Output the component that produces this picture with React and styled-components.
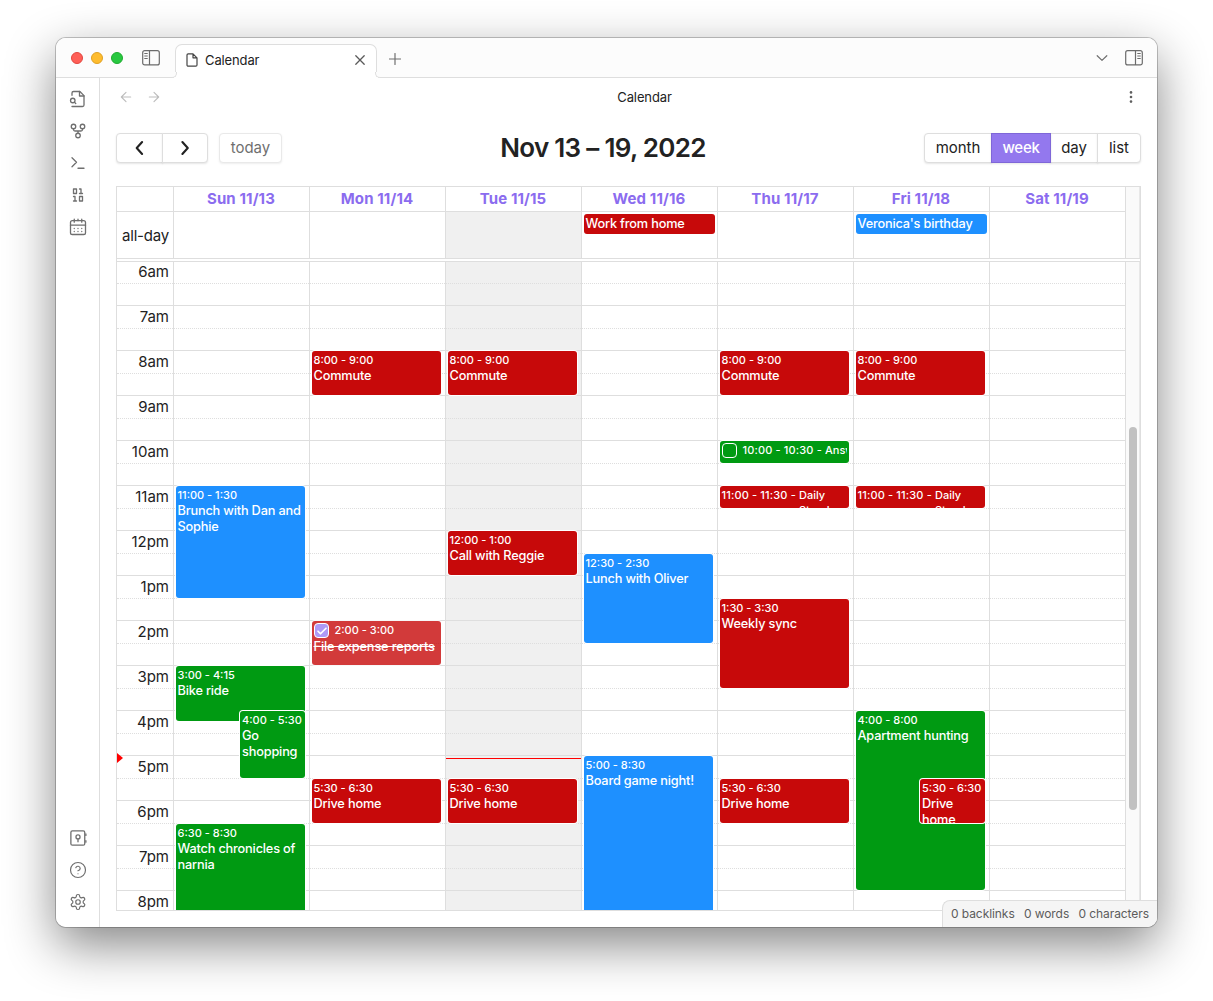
import React from "react";
import styled, { createGlobalStyle, css } from "styled-components";

const line = "#dedede";
const ink = "#222222";
const muted = "#6f6f6f";
const red = "#c7090a";
const green = "#009a12";
const blue = "#1e90ff";
const accent = "#8b6cef";

const GlobalStyle = createGlobalStyle`
  * { box-sizing: border-box; }
  body { margin: 0; background: #fff; overflow: hidden; }
`;

const Desktop = styled.div`
  width: 1213px;
  height: 1001px;
  padding: 38px 56px 74px;
  background: #fff;
  font-family: Inter, "Liberation Sans", sans-serif;
  color: ${ink};
`;

const Window = styled.div`
  width: 1101px;
  height: 889px;
  display: flex;
  flex-direction: column;
  position: relative;
  overflow: hidden;
  border-radius: 10px;
  background: #fff;
`;

const WindowShadow = styled.div`
  width: 1101px;
  border-radius: 10px;
  box-shadow: 0 0 0 1px rgba(0, 0, 0, 0.22), 0 18px 50px rgba(0, 0, 0, 0.48);
`;

const TitleBar = styled.header`
  height: 40px;
  flex: none;
  display: flex;
  background: #fcfcfc;
  border-bottom: 1px solid ${line};
`;

const Lights = styled.div`
  width: 119px;
  padding: 14px 0 0 15px;
  display: flex;
  gap: 8px;
  svg { margin: -2px 0 0 11px; }
`;

const Light = styled.span`
  width: 12px;
  height: 12px;
  border-radius: 50%;
  background: ${(p) => p.$fill};
  border: 1px solid ${(p) => p.$edge};
`;

const Tab = styled.div`
  position: relative;
  width: 202px;
  height: 34px;
  margin-top: 6px;
  padding: 0 10px 3px 10px;
  display: flex;
  align-items: center;
  background: #fff;
  border: 1px solid ${line};
  border-bottom: 0;
  border-radius: 7px 7px 0 0;
  font-size: 13px;
  letter-spacing: -0.12px;
  &::before, &::after {
    content: "";
    position: absolute;
    bottom: 0;
    width: 5px;
    height: 5px;
    background: #fcfcfc;
    border-bottom: 1px solid ${line};
  }
  &::before {
    left: -5px;
    border-right: 1px solid ${line};
    border-bottom-right-radius: 5px;
    box-shadow: 2px 2px 0 -1px #fff;
  }
  &::after {
    right: -5px;
    border-left: 1px solid ${line};
    border-bottom-left-radius: 5px;
    box-shadow: -2px 2px 0 -1px #fff;
  }
`;

const TabTitle = styled.span`
  flex: 1;
  margin-left: 7px;
`;

const BarIcons = styled.div`
  flex: 1;
  display: flex;
  align-items: center;
  padding: 1px 14px 0 12px;
  gap: 17px;
  svg:first-child { margin-right: auto; margin-top: 2px; }
`;

const Main = styled.div`
  flex: 1;
  min-height: 0;
  display: flex;
`;

const Ribbon = styled.nav`
  width: 44px;
  flex: none;
  padding: 5px 0 9px;
  display: flex;
  flex-direction: column;
  align-items: center;
  border-right: 1px solid ${line};
`;

const RibbonButton = styled.span`
  width: 32px;
  height: 32px;
  display: flex;
  align-items: center;
  justify-content: center;
  ${(p) => p.$push && css`margin-top: auto;`}
`;

const Leaf = styled.main`
  flex: 1;
  min-width: 0;
  display: flex;
  flex-direction: column;
`;

const ViewHeader = styled.div`
  height: 38px;
  display: flex;
  align-items: center;
  padding: 0 10px 0 12px;
`;

const NavIcon = styled.span`
  width: ${(p) => p.$w || 28}px;
  display: flex;
  justify-content: center;
`;

const ViewTitle = styled.div`
  flex: 1;
  margin-left: 6px;
  padding-bottom: 1px;
  text-align: center;
  font-size: 13px;
  letter-spacing: -0.12px;
`;

const Toolbar = styled.div`
  margin: 17px 16px 0;
  height: 30px;
  display: flex;
  align-items: center;
  justify-content: space-between;
`;

const ToolGroup = styled.div`
  display: flex;
  align-items: center;
`;

const ButtonGroup = styled.div`
  display: flex;
  border-radius: 4px;
  margin-right: ${(p) => p.$gap || 0}px;
`;

const ToolButton = styled.button`
  width: ${(p) => p.$w}px;
  height: 30px;
  margin: 0 0 0 ${(p) => (p.$joined ? -1 : 0)}px;
  padding: 0 0 ${(p) => (p.$icon ? 0 : 1)}px;
  display: flex;
  align-items: center;
  justify-content: center;
  font: 400 15px Inter, sans-serif;
  letter-spacing: -0.05px;
  color: ${ink};
  background: #fff;
  border: 1px solid ${line};
  border-radius: ${(p) => p.$radius || "0"};
  box-shadow: 0 1px 2px rgba(0, 0, 0, 0.1);
  ${(p) => p.$dim && css`opacity: 0.65;`}
  ${(p) => p.$active && css`
    position: relative;
    color: #fff;
    font-weight: 500;
    letter-spacing: -0.3px;
    background: #9378ee;
    border-color: #7f67d8;
  `}
`;

const RangeTitle = styled.h2`
  margin: 0;
  font-size: 26px;
  font-weight: 600;
  line-height: 30px;
  letter-spacing: -0.7px;
  white-space: nowrap;
`;

const Grid = styled.section`
  margin: 23px 16px 0;
  height: 725px;
  display: flex;
  flex-direction: column;
  border: 1px solid ${line};
`;

const HeadRows = styled.div`
  display: flex;
  height: 72px;
  flex: none;
  border-bottom: 1px solid ${line};
`;

const AxisHead = styled.div`
  width: 57px;
  border-right: 1px solid ${line};
`;

const HeadColumn = styled.div`
  width: 136px;
  border-right: 1px solid ${line};
`;

const DayName = styled.div`
  height: 25px;
  padding-right: 1px;
  border-bottom: 1px solid ${line};
  text-align: center;
  font-size: 15px;
  line-height: 24px;
  font-weight: 700;
  letter-spacing: 0.12px;
  color: ${accent};
`;

const AllDayCell = styled.div`
  height: 46px;
  padding: 2px;
  font-size: 15px;
  background: ${(p) => (p.$today ? "#f0f0f0" : "#fff")};
`;

const AllDayLabel = styled.div`
  height: 46px;
  padding: 0 4px 0;
  display: flex;
  align-items: center;
  justify-content: flex-end;
  font-size: 15px;
  letter-spacing: -0.2px;
  white-space: nowrap;
`;

const AllDayEvent = styled.div`
  width: 131px;
  height: 20px;
  padding-left: 1.5px;
  border-radius: 3px;
  background: ${(p) => p.$color};
  color: #fff;
  font-size: 12.75px;
  font-weight: 500;
  line-height: 19px;
  letter-spacing: -0.18px;
  white-space: nowrap;
`;

const Gutter = styled.div`
  width: 14px;
  background: #fafafa;
  border-right: 1px solid #e8e8e8;
`;

const Thumb = styled.div`
  width: 8px;
  height: 383px;
  margin: 165px 0 0 3px;
  border-radius: 4px;
  background: #c1c1c1;
`;

const Body = styled.div`
  margin-top: 2px;
  flex: 1;
  min-height: 0;
  display: flex;
  overflow: hidden;
  border-top: 1px solid ${line};
`;

const Axis = styled.div`
  width: 57px;
  margin-top: -1px;
  position: relative;
  border-right: 1px solid ${line};
`;

const HalfSlot = styled.div`
  height: ${(p) => (p.$first ? 23 : 22)}px;
  padding-right: 4px;
  border-bottom: 1px ${(p) => (p.$first ? "dotted" : "solid")} ${line};
  text-align: right;
  font-size: 15px;
  line-height: 22px;
`;

const DayColumn = styled.div`
  width: 136px;
  margin-top: -1px;
  display: grid;
  grid-template-columns: 135px;
  border-right: 1px solid ${line};
  background: ${(p) => (p.$today ? "#f0f0f0" : "#fff")};
  > * { grid-area: 1 / 1; }
`;

const Slots = styled.div``;

const Events = styled.div`
  display: grid;
  grid-template-columns: 66px 63px;
  grid-template-rows: repeat(15, 11px 12px 11px 11px);
  padding-left: 2px;
`;

const EventBox = styled.article`
  grid-row: ${(p) => p.$from} / ${(p) => p.$to};
  grid-column: 1 / -1;
  margin-bottom: 1px;
  margin-left: ${(p) => (p.$inset ? 64 : 0)}px;
  padding: 1px 2px 1px ${(p) => (p.$inset ? 2 : 1.5)}px;
  min-height: 0;
  overflow: hidden;
  border-radius: 3px;
  background: ${(p) => p.$color};
  box-shadow: 0 0 0 1px #fff;
  color: #fff;
  font-weight: 500;
  ${(p) => p.$done && css`opacity: 0.8;`}
  ${(p) => p.$short && css`display: flex;`}
`;

const EventHead = styled.div`
  display: flex;
  flex: none;
  height: ${(p) => (p.$check ? 17 : 16)}px;
`;

const EventTime = styled.div`
  font-size: 11px;
  line-height: 16px;
  white-space: pre;
  letter-spacing: ${(p) => (p.$short ? 0.15 : 0)}px;
`;

const EventTitle = styled.div`
  font-size: 12.75px;
  line-height: 16px;
  letter-spacing: -0.18px;
  ${(p) => p.$done && css`
    text-decoration: line-through;
    letter-spacing: -0.13px;
    white-space: nowrap;
  `}
  ${(p) => p.$short && css`
    flex: 1;
    min-width: 0;
    height: 21px;
    padding-top: 1px;
    overflow: hidden;
    font-size: 11px;
    line-height: 15px;
    letter-spacing: 0;
  `}
`;

const Check = styled.span`
  width: 15px;
  height: 15px;
  flex: none;
  margin: 1px 5.5px 0 0.5px;
  display: flex;
  align-items: center;
  justify-content: center;
  border: 1px solid #fff;
  border-radius: 4px;
  background: ${(p) => (p.$on ? "#9a80f5" : "transparent")};
`;

const NowLine = styled.div`
  height: 1px;
  margin-top: 497px;
  background: #ff0000;
`;

const NowArrow = styled.div`
  position: absolute;
  left: 0;
  top: 492px;
  border: solid transparent;
  border-width: 5px 0 5px 6px;
  border-left-color: #ff0000;
`;

const StatusBar = styled.footer`
  position: absolute;
  right: 0;
  bottom: 0;
  height: 27px;
  width: 215px;
  padding: 0 8px 1px;
  display: flex;
  align-items: center;
  justify-content: space-between;
  background: #f5f5f5;
  border: solid ${line};
  border-width: 1px 0 0 1px;
  border-top-left-radius: 8px;
  font-size: 12px;
  letter-spacing: -0.07px;
  color: #5c5c5c;
  white-space: nowrap;
`;

const Icon = ({ size = 18, stroke = 1.75, color = muted, children }) => (
  <svg width={size} height={size} viewBox="0 0 24 24" fill="none" stroke={color}
    strokeWidth={stroke} strokeLinecap="round" strokeLinejoin="round">{children}</svg>
);

const SidebarIcon = ({ flip }) => (
  <svg width="18" height="16" viewBox="0 0 18 16" fill="none" stroke="#6b6b6b" strokeWidth="1.2"
    transform={flip ? "scale(-1 1)" : undefined}>
    <rect x="0.7" y="0.7" width="16.6" height="14.2" rx="2" />
    <path d="M7.5 0.7V15M2.3 3.5h3.4M2.3 6h3.4M2.3 8.5h3.4" />
  </svg>
);

const ribbonIcons = [
  <Icon><path d="M4 22h14a2 2 0 0 0 2-2V7.5L14.5 2H6a2 2 0 0 0-2 2v3" /><path d="M14 2v6h6" /><circle cx="5" cy="14" r="3" /><path d="m9 18-1.5-1.5" /></Icon>,
  <Icon><circle cx="12" cy="18" r="3" /><circle cx="6" cy="6" r="3" /><circle cx="18" cy="6" r="3" /><path d="M18 9v1a2 2 0 0 1-2 2H8a2 2 0 0 1-2-2V9M12 12v3" /></Icon>,
  <Icon><path d="m4 17 6-6-6-6M12 19h8" /></Icon>,
  <Icon><path d="M6 20h4M14 10h4M6 14h2v6M14 4h2v6" /><rect x="6" y="4" width="4" height="6" /><rect x="14" y="14" width="4" height="6" /></Icon>,
  <Icon><rect x="2" y="3.5" width="20" height="18.5" rx="2.5" /><path d="M17 1.5v4M12 1.5v2M7 1.5v4M2 9.5h20M7 14h.01M12 14h.01M17 14h.01M7 18h.01M12 18h.01M17 18h.01" /></Icon>,
  <Icon><rect x="2.5" y="2.5" width="18.5" height="19" rx="2" /><circle cx="12" cy="10.5" r="2.7" /><path d="M12 13.5V17M22.5 6.5v2M22.5 15.5v2" /></Icon>,
  <Icon stroke={1.6}><circle cx="12" cy="12" r="10" /><path d="M9.09 9a3 3 0 0 1 5.83 1c0 2-3 3-3 3M12 17h.01" /></Icon>,
  <Icon stroke={1.6}><path d="M12.22 2h-.44a2 2 0 0 0-2 2v.18a2 2 0 0 1-1 1.73l-.43.25a2 2 0 0 1-2 0l-.15-.08a2 2 0 0 0-2.73.73l-.22.38a2 2 0 0 0 .73 2.73l.15.1a2 2 0 0 1 1 1.72v.51a2 2 0 0 1-1 1.74l-.15.09a2 2 0 0 0-.73 2.73l.22.38a2 2 0 0 0 2.73.73l.15-.08a2 2 0 0 1 2 0l.43.25a2 2 0 0 1 1 1.73V20a2 2 0 0 0 2 2h.44a2 2 0 0 0 2-2v-.18a2 2 0 0 1 1-1.73l.43-.25a2 2 0 0 1 2 0l.15.08a2 2 0 0 0 2.73-.73l.22-.39a2 2 0 0 0-.73-2.73l-.15-.08a2 2 0 0 1-1-1.74v-.5a2 2 0 0 1 1-1.74l.15-.09a2 2 0 0 0 .73-2.73l-.22-.38a2 2 0 0 0-2.73-.73l-.15.08a2 2 0 0 1-2 0l-.43-.25a2 2 0 0 1-1-1.73V4a2 2 0 0 0-2-2z" /><circle cx="12" cy="12" r="3" /></Icon>,
];

const commute = { start: 8, end: 9, time: "8:00 - 9:00", title: "Commute", color: red };
const driveHome = { start: 17.5, end: 18.5, time: "5:30 - 6:30", title: "Drive home", color: red };
const standup = { start: 11, end: 11.5, time: "11:00 - 11:30", title: "Daily Standup", color: red, short: true };

const days = [
  { name: "Sun 11/13", events: [
    { start: 11, end: 13.5, time: "11:00 - 1:30", title: "Brunch with Dan and Sophie", color: blue },
    { start: 15, end: 16.25, time: "3:00 - 4:15", title: "Bike ride", color: green },
    { start: 16, end: 17.5, time: "4:00 - 5:30", title: "Go shopping", color: green, inset: true },
    { start: 18.5, end: 20.5, time: "6:30 - 8:30", title: "Watch chronicles of narnia", color: green },
  ] },
  { name: "Mon 11/14", events: [
    commute,
    { start: 14, end: 15, time: "2:00 - 3:00", title: "File expense reports", color: red, check: true, done: true },
    driveHome,
  ] },
  { name: "Tue 11/15", today: true, events: [
    commute,
    { start: 12, end: 13, time: "12:00 - 1:00", title: "Call with Reggie", color: red },
    driveHome,
  ] },
  { name: "Wed 11/16", allDay: { title: "Work from home", color: red }, events: [
    { start: 12.5, end: 14.5, time: "12:30 - 2:30", title: "Lunch with Oliver", color: blue },
    { start: 17, end: 20.5, time: "5:00 - 8:30", title: "Board game night!", color: blue },
  ] },
  { name: "Thu 11/17", events: [
    commute,
    { start: 10, end: 10.5, time: "10:00 - 10:30", title: "Answer emails", color: green, short: true, check: true },
    standup,
    { start: 13.5, end: 15.5, time: "1:30 - 3:30", title: "Weekly sync", color: red },
    driveHome,
  ] },
  { name: "Fri 11/18", allDay: { title: "Veronica's birthday", color: blue }, events: [
    commute,
    standup,
    { start: 16, end: 20, time: "4:00 - 8:00", title: "Apartment hunting", color: green },
    { ...driveHome, inset: true },
  ] },
  { name: "Sat 11/19", events: [] },
];

const hours = Array.from({ length: 15 }, (_, i) => i + 6);
const hourLabel = (h) => (h > 12 ? `${h - 12}pm` : h === 12 ? "12pm" : `${h}am`);
const rowOf = (t) => (t - 6) * 4 + 1;

const CalendarEvent = ({ e }) => (
  <EventBox $from={rowOf(e.start)} $to={rowOf(e.end)} $color={e.color} $inset={e.inset} $short={e.short} $done={e.done}>
    <EventHead $check={e.check}>
      {e.check && (
        <Check $on={e.done}>
          {e.done && <Icon size={12} stroke={3.4} color="#fff"><path d="m4 12.5 5 5L20 6.5" /></Icon>}
        </Check>
      )}
      <EventTime $short={e.short}>{e.time}{e.short ? " - " : ""}</EventTime>
    </EventHead>
    <EventTitle $short={e.short} $done={e.done}>{e.title}</EventTitle>
  </EventBox>
);

export default function App() {
  return (
    <Desktop>
      <GlobalStyle />
      <WindowShadow>
        <Window>
          <TitleBar>
            <Lights>
              <Light $fill="#ff5f57" $edge="#e2463f" />
              <Light $fill="#febc2e" $edge="#e0a123" />
              <Light $fill="#28c840" $edge="#1fab2f" />
              <SidebarIcon />
            </Lights>
            <Tab>
              <svg width="12" height="14" viewBox="0 0 12 14" fill="none" stroke="#444" strokeWidth="1.2" strokeLinejoin="round">
                <path d="M7 .8H2.2A1.2 1.2 0 0 0 1 2v10a1.2 1.2 0 0 0 1.2 1.2h7.6A1.2 1.2 0 0 0 11 12V4.8zM7 .8v4h4" />
              </svg>
              <TabTitle>Calendar</TabTitle>
              <svg width="12" height="12" viewBox="0 0 12 12" stroke="#5a5a5a" strokeWidth="1.3" strokeLinecap="round">
                <path d="M1.8 1.8l8.4 8.4M10.2 1.8l-8.4 8.4" />
              </svg>
            </Tab>
            <BarIcons>
              <svg width="12" height="12" viewBox="0 0 12 12" stroke={muted} strokeWidth="1.2" strokeLinecap="round">
                <path d="M6 .5v11M.5 6h11" />
              </svg>
              <svg width="12" height="8" viewBox="0 0 12 8" fill="none" stroke={muted} strokeWidth="1.2" strokeLinecap="round" strokeLinejoin="round">
                <path d="M1.2 1.7 6 6.4l4.8-4.7" />
              </svg>
              <SidebarIcon flip />
            </BarIcons>
          </TitleBar>
          <Main>
            <Ribbon>
              {ribbonIcons.map((icon, i) => (
                <RibbonButton key={i} $push={i === 5}>{icon}</RibbonButton>
              ))}
            </Ribbon>
            <Leaf>
              <ViewHeader>
                <NavIcon><Icon size={16} stroke={1.7} color="#bdbdbd"><path d="M19 12H5M12 19l-7-7 7-7" /></Icon></NavIcon>
                <NavIcon><Icon size={16} stroke={1.7} color="#bdbdbd"><path d="M5 12h14M12 5l7 7-7 7" /></Icon></NavIcon>
                <ViewTitle>Calendar</ViewTitle>
                <NavIcon $w={32}>
                  <svg width="4" height="14" viewBox="0 0 4 14" fill="#5f5f5f">
                    <circle cx="2" cy="2.4" r="1.3" /><circle cx="2" cy="7" r="1.3" /><circle cx="2" cy="11.6" r="1.3" />
                  </svg>
                </NavIcon>
              </ViewHeader>
              <Toolbar>
                <ToolGroup>
                  <ButtonGroup $gap={11}>
                    <ToolButton $w={47} $icon $radius="4px 0 0 4px">
                      <Icon size={18} stroke={2.8} color={ink}><path d="m14.8 4-7.2 8 7.2 8" /></Icon>
                    </ToolButton>
                    <ToolButton $w={46} $icon $joined $radius="0 4px 4px 0">
                      <Icon size={18} stroke={2.8} color={ink}><path d="m8.5 4 7.2 8-7.2 8" /></Icon>
                    </ToolButton>
                  </ButtonGroup>
                  <ToolButton $w={63} $dim $radius="4px">today</ToolButton>
                </ToolGroup>
                <RangeTitle>Nov 13 – 19, 2022</RangeTitle>
                <ButtonGroup>
                  <ToolButton $w={68} $radius="4px 0 0 4px">month</ToolButton>
                  <ToolButton $w={60} $joined $active>week</ToolButton>
                  <ToolButton $w={48} $joined>day</ToolButton>
                  <ToolButton $w={44} $joined $radius="0 4px 4px 0">list</ToolButton>
                </ButtonGroup>
              </Toolbar>
              <Grid>
                <HeadRows>
                  <AxisHead>
                    <DayName />
                    <AllDayLabel>all-day</AllDayLabel>
                  </AxisHead>
                  {days.map((d) => (
                    <HeadColumn key={d.name}>
                      <DayName>{d.name}</DayName>
                      <AllDayCell $today={d.today}>
                        {d.allDay && <AllDayEvent $color={d.allDay.color}>{d.allDay.title}</AllDayEvent>}
                      </AllDayCell>
                    </HeadColumn>
                  ))}
                  <Gutter />
                </HeadRows>
                <Body>
                  <Axis>
                    {hours.map((h) => (
                      <React.Fragment key={h}>
                        <HalfSlot $first>{hourLabel(h)}</HalfSlot>
                        <HalfSlot />
                      </React.Fragment>
                    ))}
                    <NowArrow />
                  </Axis>
                  {days.map((d) => (
                    <DayColumn key={d.name} $today={d.today}>
                      <Slots>
                        {hours.map((h) => (
                          <React.Fragment key={h}>
                            <HalfSlot $first />
                            <HalfSlot />
                          </React.Fragment>
                        ))}
                      </Slots>
                      <Events>
                        {d.events.map((e) => <CalendarEvent key={e.time + e.title} e={e} />)}
                      </Events>
                      {d.today && <NowLine />}
                    </DayColumn>
                  ))}
                  <Gutter><Thumb /></Gutter>
                </Body>
              </Grid>
            </Leaf>
          </Main>
          <StatusBar>
            <span>0 backlinks</span>
            <span>0 words</span>
            <span>0 characters</span>
          </StatusBar>
        </Window>
      </WindowShadow>
    </Desktop>
  );
}
